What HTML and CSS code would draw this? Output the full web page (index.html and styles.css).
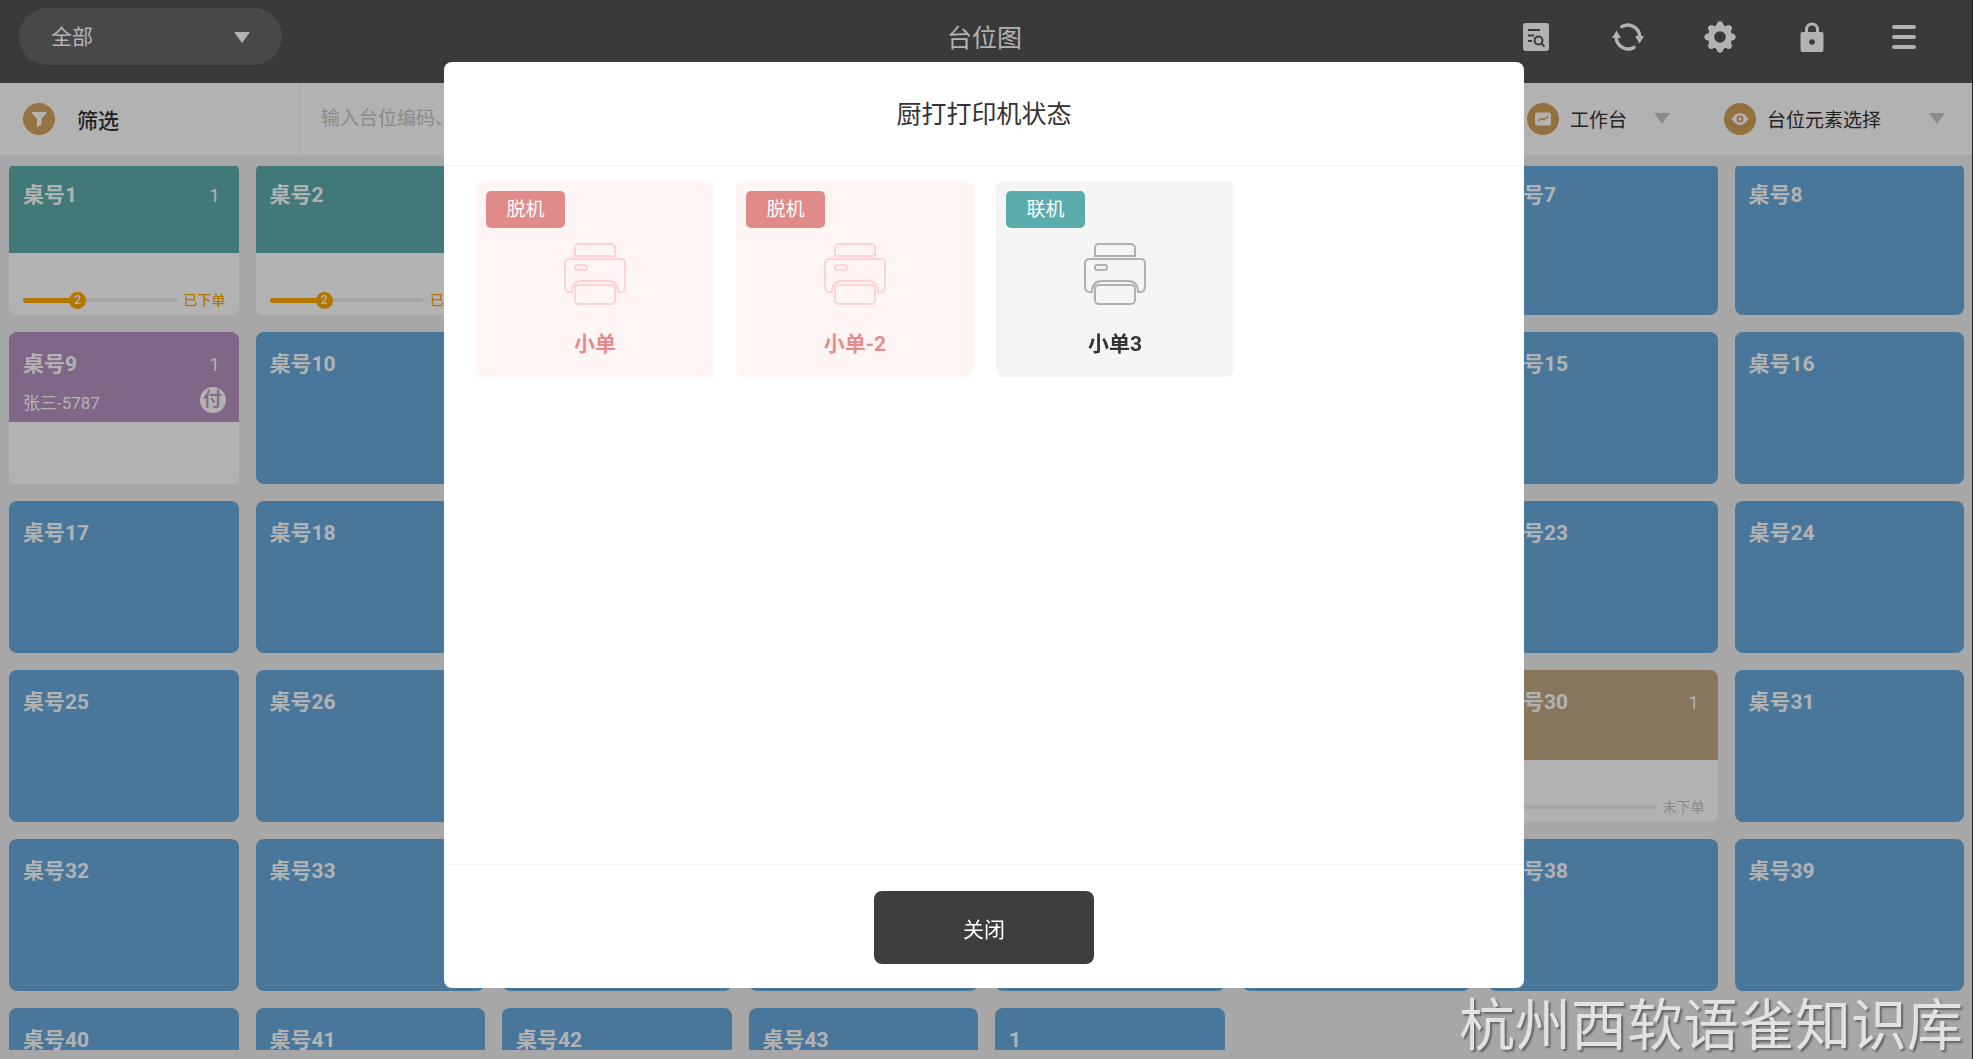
FILE: index.html
```html
<!DOCTYPE html>
<html lang="zh-CN">

<head>
    <meta charset="UTF-8">
    <meta name="viewport" content="width=device-width, initial-scale=1.0">
    <title>台位图</title>
    <link rel="stylesheet" href="styles.css">
</head>

<body>
    <div class="app">
        <header class="header">
            <div class="area">
                <select class="area-select" aria-label="区域">
                    <option>全部</option>
                </select>
                <span class="triangle"></span>
            </div>
            <h1 class="header-title">台位图</h1>
            <nav class="tools">
                <button class="tool" aria-label="查询">
                    <svg width="26" height="28" viewBox="0 0 26 28">
                        <rect width="26" height="28" rx="3" fill="#fff"/>
                        <g fill="none" stroke="#535353" stroke-width="2">
                            <path d="M5 7h12M5 12.500h6M5 18h4"/>
                            <circle cx="15.500" cy="17.500" r="4"/>
                            <path d="M18.500 20.500l3 3"/>
                        </g>
                    </svg>
                </button>
                <button class="tool" aria-label="刷新">
                    <svg width="32" height="30" viewBox="0 0 32 30">
                        <g fill="none" stroke="#fff" stroke-width="3.400" stroke-linecap="round">
                            <path d="M10 4.600A12 12 0 0 1 27.800 15"/>
                            <path d="M22 25.400A12 12 0 0 1 4.200 15"/>
                        </g>
                        <path d="M23 14h9l-4.500 7.500zM0 16h9L4.500 8.500z" fill="#fff"/>
                    </svg>
                </button>
                <button class="tool" aria-label="设置">
                    <svg width="32" height="32" viewBox="0 0 32 32">
                        <g fill="#fff">
                            <path id="tooth" d="M11.500 6l2-4.500q2.500-2.500 5 0l2 4.500v20l-2 4.500q-2.500 2.500-5 0l-2-4.500z"/>
                            <use href="#tooth" transform="rotate(45 16 16)"/>
                            <use href="#tooth" transform="rotate(90 16 16)"/>
                            <use href="#tooth" transform="rotate(135 16 16)"/>
                            <circle cx="16" cy="16" r="12"/>
                        </g>
                        <circle cx="16" cy="16" r="5.800" fill="#535353"/>
                    </svg>
                </button>
                <button class="tool" aria-label="锁定">
                    <svg width="24" height="30" viewBox="0 0 24 30">
                        <path d="M6.500 12V7.500a5.500 5.500 0 0 1 11 0V12" fill="none" stroke="#fff" stroke-width="3"/>
                        <rect x=".500" y="10" width="23" height="20" rx="2" fill="#fff"/>
                        <circle cx="12" cy="20" r="2.800" fill="#535353"/>
                    </svg>
                </button>
                <button class="tool" aria-label="菜单">
                    <svg width="24" height="26" viewBox="0 0 24 26">
                        <path d="M2 3h20M2 13h20M2 23h20" stroke="#fff" stroke-width="4" stroke-linecap="round"/>
                    </svg>
                </button>
            </nav>
        </header>

        <div class="filter">
            <button class="filter-btn">
                <svg width="32" height="32" viewBox="0 0 32 32">
                    <circle cx="16" cy="16" r="16" fill="#d6a660"/>
                    <path d="M9 9h14.500v1.500L18.500 16v5.500L14 24v-8l-5-5.500z" fill="#fff"/>
                </svg>
                筛选
            </button>
            <input class="search" type="text" placeholder="输入台位编码、" aria-label="搜索台位">
            <button class="drop drop-work">
                <svg width="32" height="32" viewBox="0 0 32 32">
                    <circle cx="16" cy="16" r="16" fill="#d2a259"/>
                    <rect x="8" y="9.500" width="16" height="13" rx="2.500" fill="#fff"/>
                    <path d="M11 18l3-2.500 3 1 4-3" fill="none" stroke="#d2a259" stroke-width="1.500"/>
                </svg>
                工作台
                <span class="triangle grey"></span>
            </button>
            <button class="drop drop-show">
                <svg width="32" height="32" viewBox="0 0 32 32">
                    <circle cx="16" cy="16" r="16" fill="#d2a259"/>
                    <path d="M7.500 16q8.500-12 17 0q-8.500 12-17 0z" fill="#fff"/>
                    <circle cx="16" cy="16" r="2.600" fill="#fff" stroke="#d2a259" stroke-width="1.800"/>
                </svg>
                台位元素选择
                <span class="triangle grey"></span>
            </button>
        </div>

        <main class="main">
            <div class="scroll">
                <ul class="tables">
                    <li class="table used teal">
                        <div class="head"><b>桌号1</b><span class="count">1</span></div>
                        <div class="foot"><div class="track"><i class="bar" style="width: 35%"><em>2</em></i></div>已下单</div>
                    </li>
                    <li class="table used teal">
                        <div class="head"><b>桌号2</b></div>
                        <div class="foot"><div class="track"><i class="bar" style="width: 35%"><em>2</em></i></div>已下单</div>
                    </li>
                    <li class="table"></li>
                    <li class="table"></li>
                    <li class="table"></li>
                    <li class="table"></li>
                    <li class="table"><b>桌号7</b></li>
                    <li class="table"><b>桌号8</b></li>

                    <li class="table used purple">
                        <div class="head">
                            <b>桌号9</b><span class="count">1</span>
                            <span class="guest">张三-5787</span><span class="paid">付</span>
                        </div>
                    </li>
                    <li class="table"><b>桌号10</b></li>
                    <li class="table"></li>
                    <li class="table"></li>
                    <li class="table"></li>
                    <li class="table"></li>
                    <li class="table"><b>桌号15</b></li>
                    <li class="table"><b>桌号16</b></li>

                    <li class="table"><b>桌号17</b></li>
                    <li class="table"><b>桌号18</b></li>
                    <li class="table"></li>
                    <li class="table"></li>
                    <li class="table"></li>
                    <li class="table"></li>
                    <li class="table"><b>桌号23</b></li>
                    <li class="table"><b>桌号24</b></li>

                    <li class="table"><b>桌号25</b></li>
                    <li class="table"><b>桌号26</b></li>
                    <li class="table"></li>
                    <li class="table"></li>
                    <li class="table"></li>
                    <li class="table"></li>
                    <li class="table used tan">
                        <div class="head"><b>桌号30</b><span class="count">1</span></div>
                        <div class="foot none"><div class="track"></div>未下单</div>
                    </li>
                    <li class="table"><b>桌号31</b></li>

                    <li class="table"><b>桌号32</b></li>
                    <li class="table"><b>桌号33</b></li>
                    <li class="table"></li>
                    <li class="table"></li>
                    <li class="table"></li>
                    <li class="table"></li>
                    <li class="table"><b>桌号38</b></li>
                    <li class="table"><b>桌号39</b></li>

                    <li class="table"><b>桌号40</b></li>
                    <li class="table"><b>桌号41</b></li>
                    <li class="table"><b>桌号42</b></li>
                    <li class="table"><b>桌号43</b></li>
                    <li class="table"><b>1</b></li>
                </ul>
            </div>
        </main>
    </div>

    <div class="mask">
        <section class="dialog" role="dialog" aria-labelledby="dialog-title">
            <h2 class="dialog-title" id="dialog-title">厨打打印机状态</h2>
            <ul class="printers">
                <li class="printer offline">
                    <span class="state">脱机</span>
                    <svg class="icon" width="64" height="64" viewBox="0 0 64 64">
                        <g id="printer" fill="none" stroke="currentColor" stroke-width="2">
                            <path d="M12 14V6a4 4 0 0 1 4-4h32a4 4 0 0 1 4 4v8z"/>
                            <path d="M9 50Q2 51 2 45V21a4 4 0 0 1 4-4h52a4 4 0 0 1 4 4v24q0 6-7 5q0-11-10-11H19Q9 39 9 50z"/>
                            <rect x="12" y="23" width="12" height="5" rx="2"/>
                            <path d="M16 43h32q4 0 4 4v11a4 4 0 0 1-4 4H16a4 4 0 0 1-4-4V47q0-4 4-4z"/>
                        </g>
                    </svg>
                    <b class="name">小单</b>
                </li>
                <li class="printer offline">
                    <span class="state">脱机</span>
                    <svg class="icon" width="64" height="64" viewBox="0 0 64 64"><use href="#printer"/></svg>
                    <b class="name">小单-2</b>
                </li>
                <li class="printer">
                    <span class="state">联机</span>
                    <svg class="icon" width="64" height="64" viewBox="0 0 64 64"><use href="#printer"/></svg>
                    <b class="name">小单3</b>
                </li>
            </ul>
            <div class="dialog-foot">
                <button class="close">关闭</button>
            </div>
        </section>
    </div>

    <div class="watermark">杭州西软语雀知识库</div>
</body>

</html>
```

FILE: styles.css
```css
* {
    margin: 0;
    padding: 0;
    box-sizing: border-box;
}

body {
    background-color: #333;
    color: #333;
    font-family: Roboto, "Noto Sans CJK SC", sans-serif;
    font-size: 19px;
    overflow: hidden;
}

ul {
    list-style: none;
}

button,
input,
select {
    border: 0;
    background: none;
    font: inherit;
    color: inherit;
}

button {
    cursor: pointer;
}

svg {
    display: block;
    flex: none;
}

.app {
    display: flex;
    flex-direction: column;
    height: 100vh;
    margin-right: 1px;
    background-color: #f0f0f0;
}

/* 顶部 */
.header {
    display: grid;
    grid-template-columns: 1fr auto 1fr;
    align-items: start;
    height: 83px;
    padding: 8px 22px 0 19px;
    background-color: #535353;
    color: #fff;
}

.area {
    position: relative;
    width: 263px;
}

.area-select {
    width: 100%;
    height: 57px;
    padding: 0 32px;
    border-radius: 28px;
    background-color: #676767;
    font-size: 21px;
    appearance: none;
}

.area .triangle {
    position: absolute;
    top: 24px;
    right: 32px;
    pointer-events: none;
}

.triangle {
    border: 8px solid transparent;
    border-top: 11px solid #fff;
    border-bottom: 0;
}

.triangle.grey {
    margin-left: auto;
    border-top-color: #c8c8c8;
}

.header-title {
    font-size: 25px;
    font-weight: 400;
    line-height: 61px;
}

.tools {
    display: flex;
    justify-content: flex-end;
}

.tool {
    display: flex;
    align-items: center;
    justify-content: center;
    width: 92px;
    height: 58px;
}

/* 筛选栏 */
.filter {
    display: flex;
    height: 73px;
    padding-bottom: 1px;
    background-color: #fff;
    border-bottom: 1px solid #f4f4f4;
}

.filter-btn {
    display: flex;
    align-items: center;
    gap: 22px;
    width: 300px;
    padding-left: 23px;
    border-right: 1px solid #eee;
    font-size: 21px;
    font-weight: 500;
}

.search {
    flex: 1;
    min-width: 0;
    padding: 0 21px;
}

.search::placeholder {
    color: #c8c8c8;
}

.drop {
    display: flex;
    align-items: center;
    gap: 11px;
}

.drop-work {
    width: 143px;
    margin-right: 54px;
}

.drop-show {
    width: 221px;
    margin-right: 27px;
}

/* 台位 */
.main {
    flex: 1;
    min-height: 0;
    padding: 10px 8px 9px 9px;
}

.scroll {
    height: 100%;
    overflow: hidden;
}

.tables {
    display: grid;
    grid-template-columns: repeat(8, 1fr);
    gap: 17px;
    margin-top: -3px;
}

.table {
    height: 152px;
    padding: 17px 14px;
    border-radius: 8px;
    background-color: #67abdf;
    color: #fff;
    overflow: hidden;
}

.table b {
    font-size: 21px;
    line-height: 30px;
}

.table.used {
    display: flex;
    flex-direction: column;
    padding: 0;
    background-color: #fff;
}

.head {
    display: grid;
    grid-template-columns: 1fr auto;
    align-content: start;
    row-gap: 6px;
    height: 90px;
    padding: 17px 13px 0 14px;
}

.teal .head {
    background-color: #5daeae;
}

.purple .head {
    background-color: #b892c2;
}

.tan .head {
    background-color: #c2aa83;
}

.count {
    padding-right: 6px;
    font-size: 18px;
    line-height: 32px;
    text-align: right;
}

.guest {
    font-size: 17px;
    line-height: 32px;
}

.paid {
    width: 26px;
    height: 26px;
    border-radius: 50%;
    background-color: #fff;
    color: #b892c2;
    font-size: 19px;
    font-weight: 500;
    line-height: 26px;
    text-align: center;
}

.foot {
    display: flex;
    align-items: center;
    gap: 6px;
    margin-top: auto;
    padding: 0 13px 4px 14px;
    color: #ffab00;
    font-size: 14px;
    font-weight: 500;
    line-height: 22px;
}

.foot.none {
    color: #c8c8c8;
    font-weight: 400;
}

.track {
    flex: 1;
    height: 4px;
    border-radius: 2px;
    background-color: #ececec;
}

.bar {
    display: block;
    position: relative;
    height: 5px;
    border-radius: 3px;
    background-color: #ffab00;
}

.bar em {
    position: absolute;
    top: -6px;
    right: -9px;
    width: 17px;
    height: 17px;
    border-radius: 50%;
    background-color: #ffab00;
    color: #fff;
    font-size: 12px;
    font-style: normal;
    line-height: 17px;
    text-align: center;
}

/* 弹窗 */
.mask {
    position: fixed;
    inset: 0;
    display: flex;
    padding: 62px 0 71px 22.5%;
    background-color: rgba(0, 0, 0, .3);
}

.dialog {
    display: flex;
    flex-direction: column;
    width: 70.64%;
    border-radius: 8px;
    background-color: #fff;
}

.dialog-title {
    padding-top: 2px;
    border-bottom: 1px solid #f2f4f4;
    font-size: 25px;
    font-weight: 400;
    line-height: 101px;
    text-align: center;
}

.printers {
    flex: 1;
    display: grid;
    grid-template-columns: repeat(4, 1fr);
    align-content: start;
    gap: 22px;
    padding: 15px 30px 15px 32px;
}

.printer {
    display: flex;
    flex-direction: column;
    align-items: center;
    height: 196px;
    padding: 10px;
    border-radius: 8px;
    background-color: #f5f5f5;
    color: #333;
}

.state {
    align-self: flex-start;
    width: 79px;
    border-radius: 5px;
    background-color: #5aadac;
    color: #fff;
    line-height: 37px;
    text-align: center;
}

.icon {
    margin-top: 14px;
    color: #b0b0b0;
}

.name {
    margin-top: 22px;
    font-size: 21px;
    line-height: 32px;
}

.offline {
    background-color: #fff5f4;
    color: #e38d8d;
}

.offline .state {
    background-color: #e08a8a;
}

.offline .icon {
    color: #ffd3d5;
}

.dialog-foot {
    padding: 26px 0 24px;
    border-top: 1px solid #f2f4f4;
    text-align: center;
}

.close {
    width: 220px;
    height: 73px;
    border-radius: 8px;
    background-color: #3e3d3b;
    color: #fff;
    font-size: 21px;
}

.watermark {
    position: fixed;
    right: 10px;
    bottom: 3px;
    color: #e2e2e2;
    font-size: 56px;
    line-height: 60px;
    text-shadow: 2px 2px 2px #666;
}
```
